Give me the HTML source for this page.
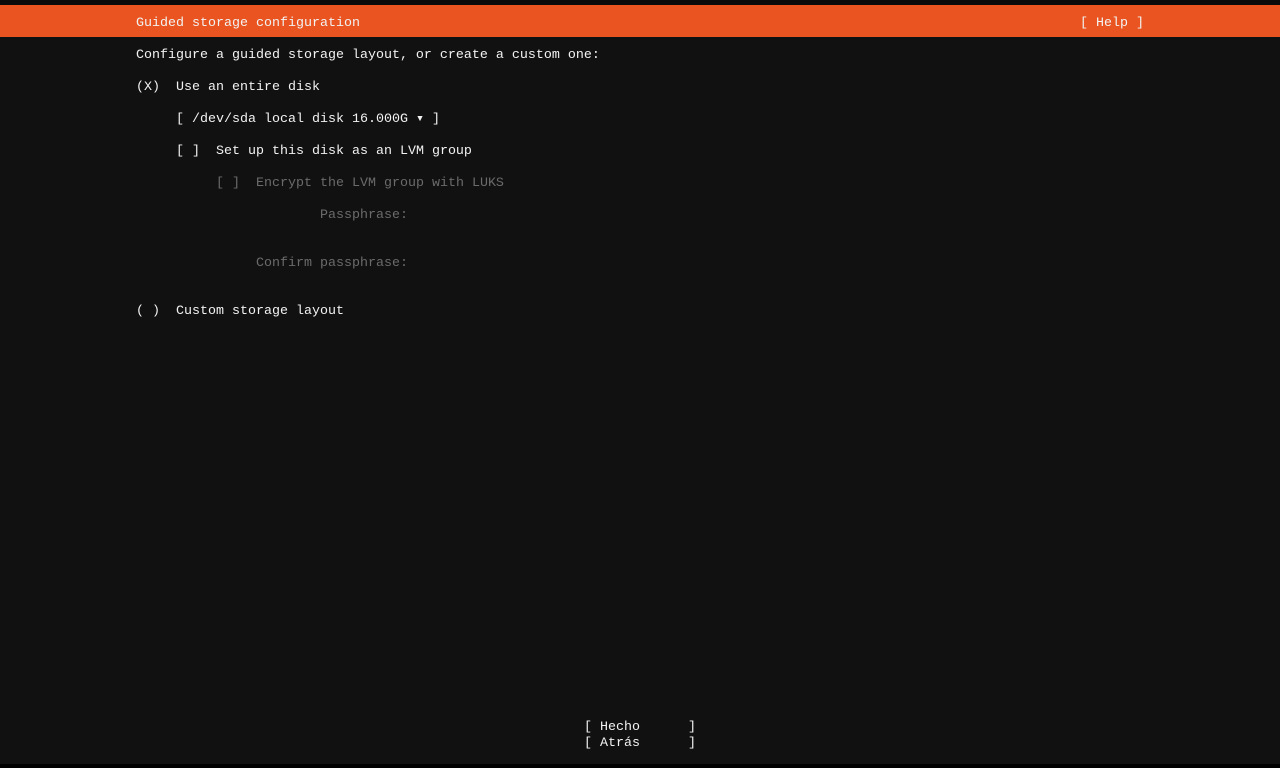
<!DOCTYPE html>
<html><head><meta charset="utf-8"><style>
html,body{margin:0;padding:0;background:#000;}
#s{position:relative;width:1280px;height:768px;background:#111111;overflow:hidden;font-family:"Liberation Mono",monospace;font-size:13.33px;color:#f2f2f2;}
.t{position:absolute;height:16px;line-height:16px;white-space:pre;}
.g{color:#6b6b6b;}
#top{position:absolute;left:0;top:0;width:1280px;height:5px;background:#0b0b0b;}
#bar{position:absolute;left:0;top:5px;width:1280px;height:32px;background:#e95420;}
#bot{position:absolute;left:0;top:764px;width:1280px;height:4px;background:#000;}
</style></head><body><div id="s">
<div id="top"></div><div id="bar"></div><div id="bot"></div>
<div class="t" style="left:136px;top:16px">Guided storage configuration</div>
<div class="t" style="left:1080px;top:16px">[ Help ]</div>
<div class="t" style="left:136px;top:48px">Configure a guided storage layout, or create a custom one:</div>
<div class="t" style="left:136px;top:80px">(X)  Use an entire disk</div>
<div class="t" style="left:176px;top:112px">[ /dev/sda local disk 16.000G ▾ ]</div>
<div class="t" style="left:176px;top:144px">[ ]  Set up this disk as an LVM group</div>
<div class="t g" style="left:216px;top:176px">[ ]  Encrypt the LVM group with LUKS</div>
<div class="t g" style="left:320px;top:208px">Passphrase:</div>
<div class="t g" style="left:256px;top:256px">Confirm passphrase:</div>
<div class="t" style="left:136px;top:304px">( )  Custom storage layout</div>
<div class="t" style="left:584px;top:720px">[ Hecho      ]</div>
<div class="t" style="left:584px;top:736px">[ Atrás      ]</div>
</div></body></html>
